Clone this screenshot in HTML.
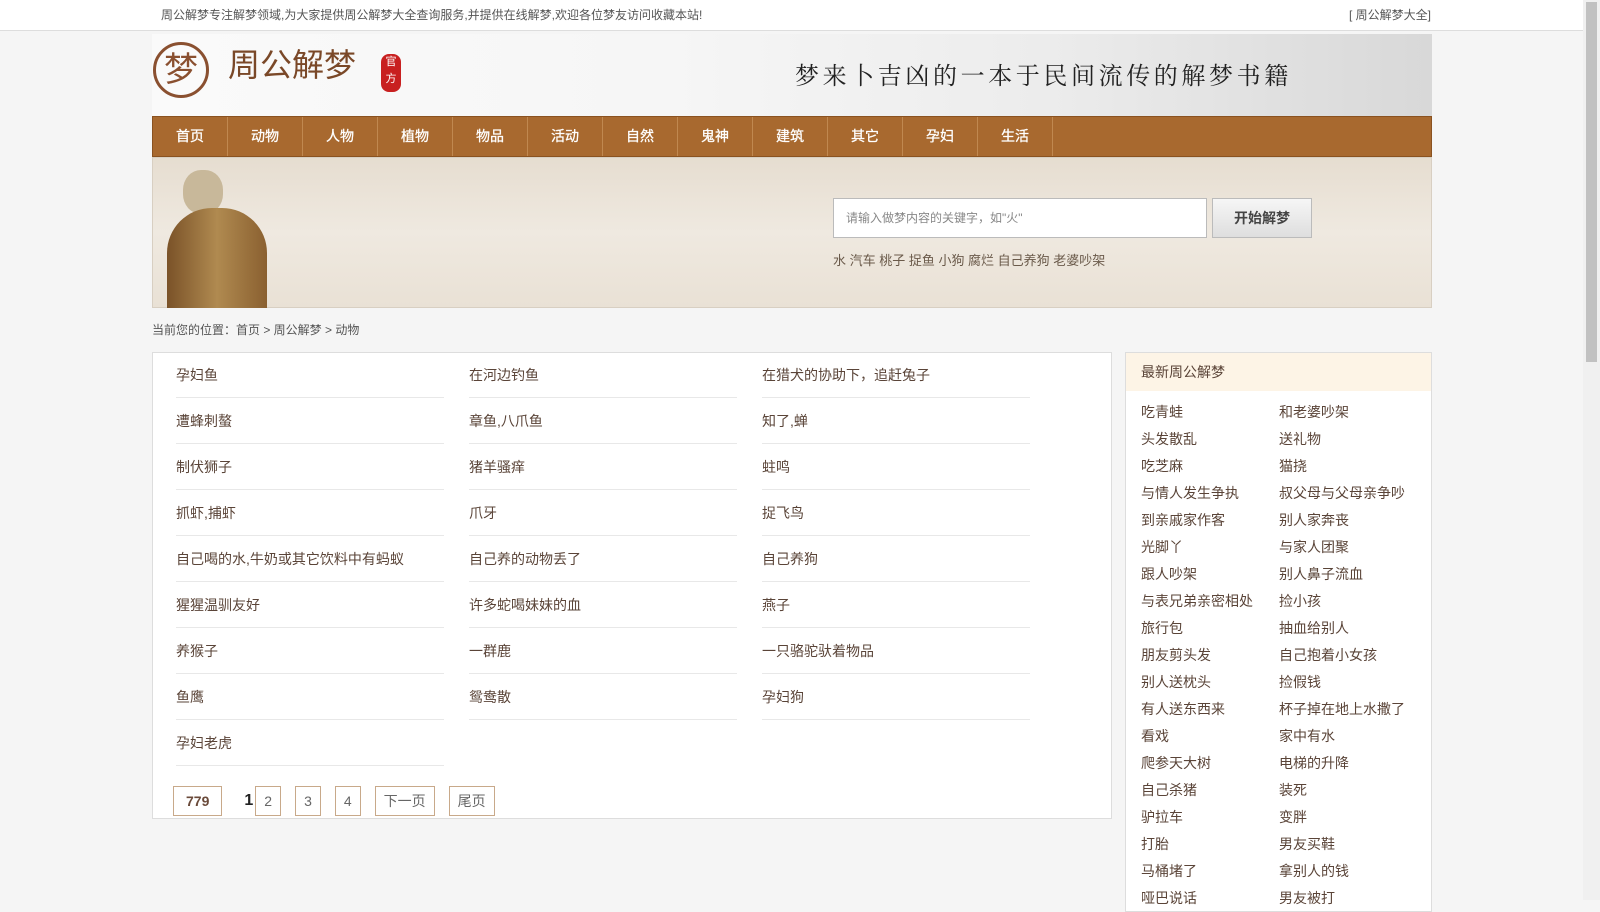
<!DOCTYPE html>
<html><head><meta charset="utf-8"><style>
*{margin:0;padding:0;box-sizing:border-box}
body{width:1600px;height:900px;overflow:hidden;background:#f5f5f5;font-family:"Liberation Sans","Noto Sans CJK SC",sans-serif;color:#333;font-size:14px;position:relative}
.top{height:31px;background:#fff;border-bottom:1px solid #ddd;font-size:12px;color:#555;line-height:30px}
.w{position:absolute;left:152px;width:1280px}
.hdr{top:34px;height:82px;background:linear-gradient(90deg,#fafafa 0%,#f6f6f6 40%,#ececec 70%,#d8d8d8 100%)}
.nav{top:116px;height:41px;background:#a8692f;border:1px solid #8a5220;display:flex}
.nav a{width:75px;color:#fff;text-align:center;line-height:39px;font-size:14px;border-right:1px solid #c08850;text-decoration:none;-webkit-text-stroke:0.3px #fff}
.ban{top:157px;height:151px;background:linear-gradient(180deg,#e6ddd0,#efe9e0 50%,#e9e1d5);border:1px solid #d8cfc2}
.bc{top:321px;font-size:12px;color:#555}
.box{top:352px;width:960px;height:467px;background:#fff;border:1px solid #ddd}
.col{position:absolute;top:-1px;width:268px}
.col div{height:46px;line-height:46px;border-bottom:1px solid #e8e8e8;color:#5a4438;font-size:14px}
.pg{position:absolute;top:433px;left:20px;display:flex;align-items:center;font-size:14px}
.pg span{border:1px solid #c8a98a;height:30px;line-height:28px;padding:0 8px;color:#666;margin-right:14px}
.side{left:1125px;width:307px;top:352px;height:560px;background:#fff;border:1px solid #ddd}
.side h3{height:38px;background:#fdf4e6;font-weight:normal;font-size:14px;color:#5a4438;line-height:38px;padding-left:15px}
.side .g{display:grid;grid-template-columns:138px 150px;padding:8px 0 0 15px}
.side .g div{height:27px;line-height:27px;color:#5a4438;font-size:14px;white-space:nowrap}
</style></head><body>
<div class="top"><span style="position:absolute;left:161px">周公解梦专注解梦领域,为大家提供周公解梦大全查询服务,并提供在线解梦,欢迎各位梦友访问收藏本站!</span><span style="position:absolute;left:1349px">[ 周公解梦大全]</span></div>
<div style="position:absolute;right:0;top:0;width:17px;height:900px;background:#f0f0f0"><div style="margin:2px 3px;height:360px;background:#c1c1c1"></div></div>
<div class="w hdr">
<div style="position:absolute;left:1px;top:8px;width:56px;height:56px;border:3px solid #8a5030;border-radius:50%;color:#8a5030;font-size:34px;text-align:center;line-height:50px">梦</div>
<div style="position:absolute;left:76px;top:6px;font-size:32px;color:#7a4828">周公解梦</div>
<div style="position:absolute;left:229px;top:20px;width:20px;height:38px;background:#c82020;border-radius:8px;color:#fff;font-size:11px;line-height:17px;text-align:center">官方</div>
<div style="position:absolute;left:643px;top:22px;font-size:24px;letter-spacing:3.6px;color:#222;font-family:'Noto Serif CJK SC',serif">梦来卜吉凶的一本于民间流传的解梦书籍</div>
</div>
<div class="w nav"><a>首页</a><a>动物</a><a>人物</a><a>植物</a><a>物品</a><a>活动</a><a>自然</a><a>鬼神</a><a>建筑</a><a>其它</a><a>孕妇</a><a>生活</a></div>
<div class="w ban">
<div style="position:absolute;left:30px;top:12px;width:40px;height:44px;border-radius:45%;background:#c8b89a"></div>
<div style="position:absolute;left:14px;top:50px;width:100px;height:100px;border-radius:45% 45% 0 0;background:linear-gradient(90deg,#7a5228,#b08a50 50%,#8a6030)"></div>
<div style="position:absolute;left:680px;top:40px;width:374px;height:40px;background:#fff;border:1px solid #bbb;font-size:12px;color:#888;line-height:38px;padding-left:12px">请输入做梦内容的关键字，如"火"</div>
<div style="position:absolute;left:1059px;top:40px;width:100px;height:40px;background:linear-gradient(#f6f6f6,#dedede);border:1px solid #bbb;font-size:14px;font-weight:bold;color:#444;text-align:center;line-height:38px">开始解梦</div>
<div style="position:absolute;left:680px;top:92px;font-size:13px;color:#6a5a4a">水 汽车 桃子 捉鱼 小狗 腐烂 自己养狗 老婆吵架</div>
</div>
<div class="w bc">当前您的位置：首页 &gt; 周公解梦 &gt; 动物</div>
<div class="w box">
<div class="col" style="left:23px"><div>孕妇鱼</div><div>遭蜂刺螯</div><div>制伏狮子</div><div>抓虾,捕虾</div><div>自己喝的水,牛奶或其它饮料中有蚂蚁</div><div>猩猩温驯友好</div><div>养猴子</div><div>鱼鹰</div><div>孕妇老虎</div></div>
<div class="col" style="left:316px"><div>在河边钓鱼</div><div>章鱼,八爪鱼</div><div>猪羊骚痒</div><div>爪牙</div><div>自己养的动物丢了</div><div>许多蛇喝妹妹的血</div><div>一群鹿</div><div>鸳鸯散</div></div>
<div class="col" style="left:609px"><div>在猎犬的协助下，追赶兔子</div><div>知了,蝉</div><div>蛀鸣</div><div>捉飞鸟</div><div>自己养狗</div><div>燕子</div><div>一只骆驼驮着物品</div><div>孕妇狗</div></div>
<div class="pg"><span style="padding:0 12px;font-weight:bold;color:#6a4a3a;margin-right:22px">779</span><b style="font-size:16px;margin-right:2px;color:#222">1</b><span>2</span><span>3</span><span>4</span><span>下一页</span><span>尾页</span></div>
</div>
<div class="w side"><h3>最新周公解梦</h3><div class="g">
<div>吃青蛙</div><div>和老婆吵架</div><div>头发散乱</div><div>送礼物</div><div>吃芝麻</div><div>猫挠</div><div>与情人发生争执</div><div>叔父母与父母亲争吵</div><div>到亲戚家作客</div><div>别人家奔丧</div><div>光脚丫</div><div>与家人团聚</div><div>跟人吵架</div><div>别人鼻子流血</div><div>与表兄弟亲密相处</div><div>捡小孩</div><div>旅行包</div><div>抽血给别人</div><div>朋友剪头发</div><div>自己抱着小女孩</div><div>别人送枕头</div><div>捡假钱</div><div>有人送东西来</div><div>杯子掉在地上水撒了</div><div>看戏</div><div>家中有水</div><div>爬参天大树</div><div>电梯的升降</div><div>自己杀猪</div><div>装死</div><div>驴拉车</div><div>变胖</div><div>打胎</div><div>男友买鞋</div><div>马桶堵了</div><div>拿别人的钱</div><div>哑巴说话</div><div>男友被打</div>
</div></div>
</body></html>
